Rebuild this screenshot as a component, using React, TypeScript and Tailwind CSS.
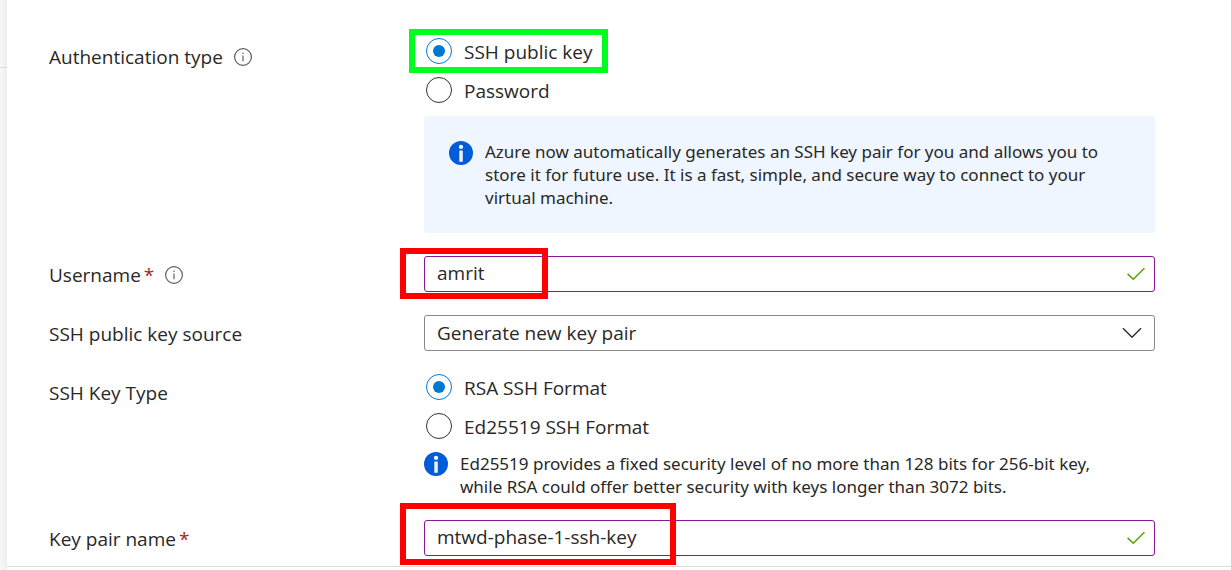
import { useState, type ReactNode } from "react";

function InfoOutline() {
  return (
    <svg viewBox="0 0 18 18" className="ml-[11px] size-[18px] shrink-0" fill="none" role="img" aria-label="More information">
      <circle cx="9" cy="9" r="8.4" stroke="#605e5c" strokeWidth="1.2" />
      <path d="M9 7.6v5.6" stroke="#605e5c" strokeWidth="1.2" />
      <circle cx="9" cy="5.3" r="0.8" fill="#605e5c" />
    </svg>
  );
}

function InfoSolid() {
  return (
    <svg viewBox="0 0 24 24" className="size-6 shrink-0" aria-hidden="true">
      <circle cx="12" cy="12" r="12" fill="#015cda" />
      <circle cx="12" cy="5.9" r="2.1" fill="#fff" />
      <rect x="10.3" y="9.6" width="3.5" height="11.2" rx="0.4" fill="#f2f2f2" />
    </svg>
  );
}

function Check() {
  return (
    <svg viewBox="0 0 18 13" className="pointer-events-none absolute top-1/2 right-[10px] h-[13px] w-[18px] -translate-y-1/2" fill="none" aria-hidden="true">
      <path d="M0.6 6.4 6.3 11.8 17.4 0.8" stroke="#57a300" strokeWidth="1.5" />
    </svg>
  );
}

function Row({ label, children, className }: { label: ReactNode; children: ReactNode; className?: string }) {
  return (
    <div className={`flex items-start ${className ?? ""}`}>
      <div className="flex h-[37px] w-[375px] shrink-0 items-center">{label}</div>
      <div className="min-w-0 flex-1">{children}</div>
    </div>
  );
}

function Required() {
  return <span className="ml-[3px] text-[#a4262c]">*</span>;
}

function Radio({ name, label, checked, onSelect }: { name: string; label: string; checked: boolean; onSelect: () => void }) {
  return (
    <label className="flex h-[26px] w-fit items-center gap-3">
      <input
        type="radio"
        name={name}
        checked={checked}
        onChange={onSelect}
        className="grid size-[26px] shrink-0 appearance-none place-content-center rounded-full border border-[#323130] bg-white before:size-3 before:rounded-full checked:border-[#0078d4] checked:before:bg-[#0078d4]"
      />
      <span className="pt-px">{label}</span>
    </label>
  );
}

function TextField({ id, initial, mark }: { id: string; initial: string; mark: string }) {
  return (
    <div className="relative">
      <input
        id={id}
        type="text"
        defaultValue={initial}
        className="block h-9 w-full rounded-[3px] border border-[#881798] bg-white pr-10 pb-[2px] pl-3 outline-none"
      />
      <Check />
      <div className={`pointer-events-none absolute border-6 border-[#ff0000] ${mark}`} />
    </div>
  );
}

export default function App() {
  const [auth, setAuth] = useState("ssh");
  const [keyType, setKeyType] = useState("rsa");

  return (
    <div className="flex min-h-screen bg-white font-['Open_Sans',sans-serif] text-[19px] leading-6 text-[#292827]">
      <div className="w-[7px] shrink-0 bg-linear-to-r from-[#f8f8f8] to-[#eeeeee] pt-[67px]">
        <div className="h-px bg-[#dcdcdc]" />
      </div>
      <main className="min-w-0 flex-1">
        <form className="border-b border-[#dcdcdc] pt-[38px] pr-[76px] pb-[9px] pl-[42px]">
          <Row label={<><span>Authentication type</span><InfoOutline /></>}>
            <div role="radiogroup" aria-label="Authentication type" className="flex flex-col gap-[13px] pl-[2px]">
              <div className="relative w-fit">
                <Radio name="auth" label="SSH public key" checked={auth === "ssh"} onSelect={() => setAuth("ssh")} />
                <div className="pointer-events-none absolute -top-[9px] -bottom-[9px] -left-[17px] w-[199px] border-6 border-[#00ff1e]" />
              </div>
              <Radio name="auth" label="Password" checked={auth === "password"} onSelect={() => setAuth("password")} />
            </div>
            <div className="mt-[13px] flex gap-3 rounded-[3px] bg-[#eff6ff] py-6 pr-10 pl-[25px] font-['Noto_Sans',sans-serif] text-[17px] leading-[23px]">
              <div className="pt-px"><InfoSolid /></div>
              <p className="max-w-[630px]">
                Azure now automatically generates an SSH key pair for you and allows you to store it for future use. It is a fast, simple, and secure way to connect to your virtual machine.
              </p>
            </div>
          </Row>

          <Row className="mt-[23px]" label={<><label htmlFor="username">Username<Required /></label><InfoOutline /></>}>
            <TextField id="username" initial="amrit" mark="-top-2 -bottom-[7px] -left-6 w-[148px]" />
          </Row>

          <Row className="mt-[22px]" label={<label htmlFor="source">SSH public key source</label>}>
            <div className="relative">
              <select id="source" className="block h-9 w-full appearance-none rounded-[3px] border border-[#8a8886] bg-white pr-10 pl-3 outline-none">
                <option>Generate new key pair</option>
              </select>
              <svg viewBox="0 0 20 11" className="pointer-events-none absolute top-1/2 right-[13px] h-[11px] w-5 -translate-y-1/2" fill="none" aria-hidden="true">
                <path d="M1 0.8 10 9.8 19 0.8" stroke="#323130" strokeWidth="1.5" />
              </svg>
            </div>
          </Row>

          <Row className="mt-[22px]" label="SSH Key Type">
            <div role="radiogroup" aria-label="SSH Key Type" className="flex flex-col gap-[13px] pl-[2px]">
              <Radio name="key-type" label="RSA SSH Format" checked={keyType === "rsa"} onSelect={() => setKeyType("rsa")} />
              <Radio name="key-type" label="Ed25519 SSH Format" checked={keyType === "ed"} onSelect={() => setKeyType("ed")} />
            </div>
            <div className="mt-[13px] flex gap-3 font-['Noto_Sans',sans-serif] text-[17px] leading-[23px]">
              <InfoSolid />
              <p className="max-w-[650px]">
                Ed25519 provides a fixed security level of no more than 128 bits for 256-bit key, while RSA could offer better security with keys longer than 3072 bits.
              </p>
            </div>
          </Row>

          <Row className="mt-[22px]" label={<label htmlFor="key-name">Key pair name<Required /></label>}>
            <TextField id="key-name" initial="mtwd-phase-1-ssh-key" mark="-top-[17px] -bottom-[9px] -left-6 w-[276px]" />
          </Row>
        </form>
      </main>
    </div>
  );
}
